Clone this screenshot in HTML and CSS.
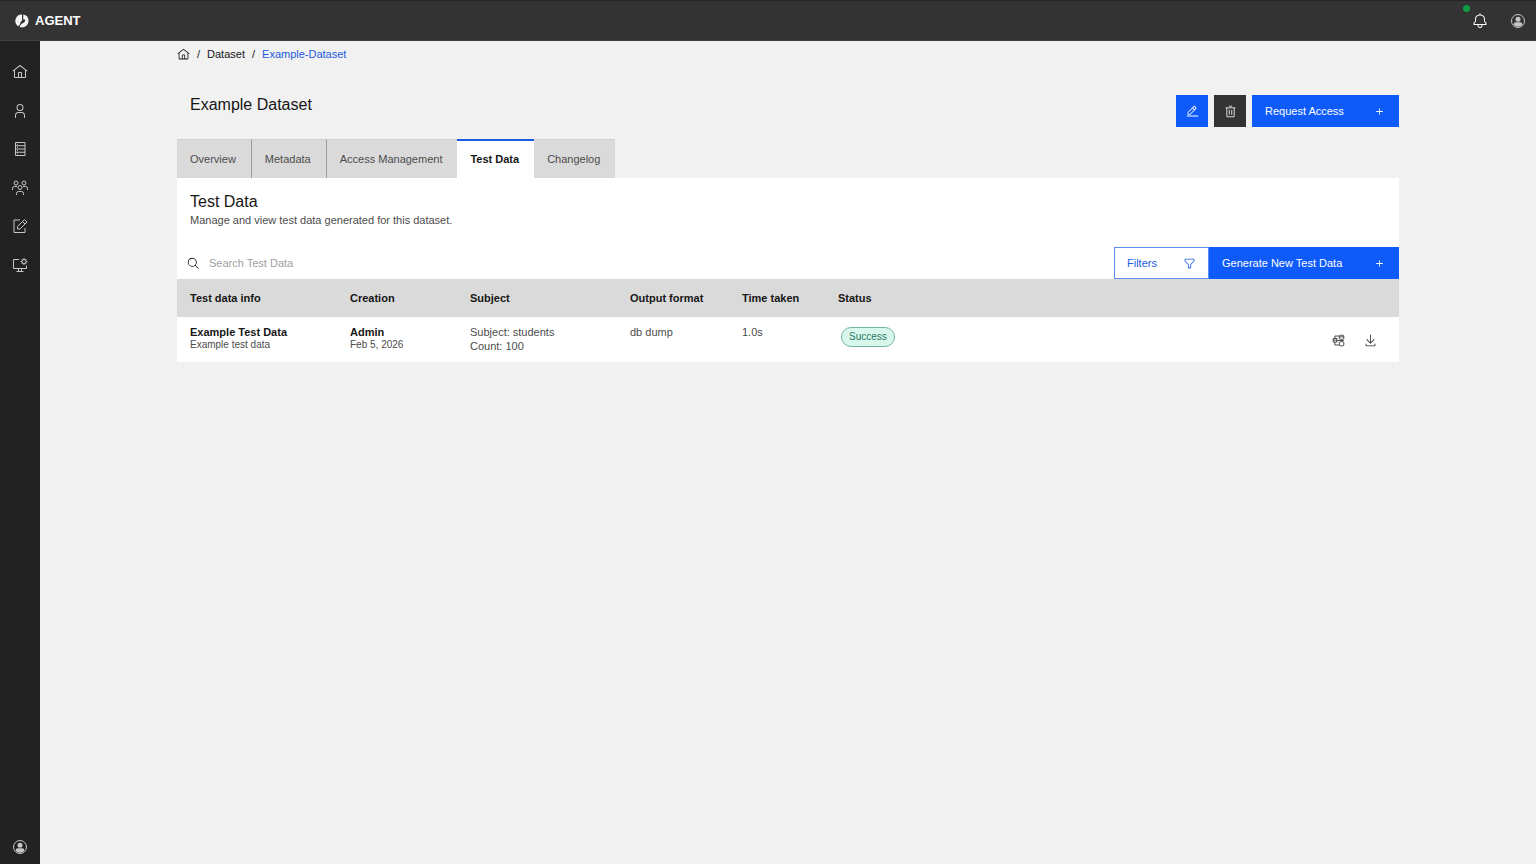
FILE: index.html
```html
<!DOCTYPE html>
<html lang="en">
<head>
  <meta charset="UTF-8" />
  <meta name="viewport" content="width=device-width, initial-scale=1" />
  <title>Example Dataset - Test Data</title>
  <link rel="stylesheet" href="styles.css">
</head>
<body>

  <!-- Shared icons -->
  <svg class="sprite" aria-hidden="true">
    <symbol id="home" viewBox="0 0 32 32"><path d="M16.6123,2.2138a1.01,1.01,0,0,0-1.2427,0L1,13.4194l1.2427,1.5717L4,13.6208V26a2.0041,2.0041,0,0,0,2,2H26a2.0037,2.0037,0,0,0,2-2V13.63L29.7573,15,31,13.4282ZM18,26H14V18h4Zm2,0V18a2.0023,2.0023,0,0,0-2-2H14a2.002,2.002,0,0,0-2,2v8H6V12.0615l10-7.79,10,7.8005V26Z"/></symbol>
    <symbol id="avatar" viewBox="0 0 32 32">
      <circle cx="16" cy="16" r="13" fill="none" stroke="currentColor" stroke-width="2"/>
      <circle cx="16" cy="12.500" r="5"/>
      <path d="M7.500 24v-1.500a4 4 0 0 1 4-4h9a4 4 0 0 1 4 4V24a12 12 0 0 1-17 0z"/>
    </symbol>
    <symbol id="add" viewBox="0 0 32 32"><path d="M17 15V8h-2v7H8v2h7v7h2v-7h7v-2z"/></symbol>
  </svg>

  <!-- Header -->
  <header class="header">
    <a href="#" class="brand">
      <svg class="brand-logo" viewBox="0 0 28 28">
        <path d="M14 1A13 13 0 0 0 6 24.500C12 22 9 16 14 13z"/>
        <path d="M16.500 1v10h4c0 5-2 6-5 7.500S10 22 9.500 26A13 13 0 0 0 27 14 13 13 0 0 0 16.500 1z"/>
      </svg>
      AGENT
    </a>
    <div class="header-actions">
      <button class="header-btn" aria-label="Notifications">
        <svg class="icon" viewBox="0 0 32 32"><path d="M28.7071,19.293,26,16.5859V13a10.0136,10.0136,0,0,0-9-9.9492V1H15V3.0508A10.0136,10.0136,0,0,0,6,13v3.5859L3.2929,19.293A1,1,0,0,0,3,20v3a1,1,0,0,0,1,1h7v.7768a5.152,5.152,0,0,0,4.5,5.1987A5.0057,5.0057,0,0,0,21,25V24h7a1,1,0,0,0,1-1V20A1,1,0,0,0,28.7071,19.293ZM19,25a3,3,0,0,1-6,0V24h6Zm8-3H5V20.4141L7.707,17.707A1,1,0,0,0,8,17V13a8,8,0,0,1,16,0v4a1,1,0,0,0,.293.707L27,20.4141Z"/></svg>
        <span class="dot"></span>
      </button>
      <button class="header-btn profile" aria-label="Profile"><svg class="icon"><use href="#avatar"/></svg></button>
    </div>
  </header>

  <div class="layout">
    <!-- Sidebar -->
    <nav class="sidebar">
      <div class="side-links">
        <a href="#" aria-label="Home"><svg class="icon"><use href="#home"/></svg></a>
        <a href="#" aria-label="User"><svg class="icon" viewBox="0 0 32 32"><path d="M16 4a5 5 0 1 1-5 5 5 5 0 0 1 5-5m0-2a7 7 0 1 0 7 7A7 7 0 0 0 16 2zM26 30H24V25a5 5 0 0 0-5-5H13a5 5 0 0 0-5 5v5H6V25a7 7 0 0 1 7-7h6a7 7 0 0 1 7 7z"/></svg></a>
        <a href="#" aria-label="Datasets">
          <svg class="icon line" viewBox="0 0 32 32"><path d="M7 3h19v26H7zM7 9.500h19M7 16h19M7 22.500h19M10 6.500h2M10 12.500h2M10 19.500h2M10 26h2"/></svg>
        </a>
        <a href="#" aria-label="Groups">
          <svg class="icon line" viewBox="0 0 32 32">
            <circle cx="8" cy="6" r="4"/><circle cx="24" cy="6" r="4"/><circle cx="16" cy="15" r="4"/>
            <path d="M1 20v-3a4 4 0 0 1 4-4h5M31 20v-3a4 4 0 0 0-4-4h-5M9 30v-3a4 4 0 0 1 4-4h6a4 4 0 0 1 4 4v3"/>
          </svg>
        </a>
        <a href="#" aria-label="Requests">
          <svg class="icon line" viewBox="0 0 32 32"><path d="M16 4H4v25h22v-9M11 22v-5L25 3l5 5-14 14zM21 7l5 5"/></svg>
        </a>
        <a href="#" aria-label="System settings">
          <svg class="icon line" viewBox="0 0 32 32">
            <path d="M14 5H3v18h26v-6M13 23v6M19 23v6M9 29h14"/>
            <circle cx="24" cy="9" r="4"/>
            <path d="M24 2v3M24 13v3M17 9h3M28 9h3M19 4l2 2M27 12l2 2M29 4l-2 2M21 12l-2 2"/>
          </svg>
        </a>
      </div>
      <a href="#" class="side-user" aria-label="Account"><svg class="icon"><use href="#avatar"/></svg></a>
    </nav>

    <!-- Main Content -->
    <main class="content">
      <nav class="breadcrumb" aria-label="Breadcrumb">
        <a href="#" aria-label="Home"><svg class="icon-sm"><use href="#home"/></svg></a>
        <span>/</span>
        <a href="#">Dataset</a>
        <span>/</span>
        <a href="#" class="current">Example-Dataset</a>
      </nav>

      <div class="title-row">
        <h1>Example Dataset</h1>
        <div class="title-actions">
          <button class="btn btn-icon" aria-label="Edit">
            <svg class="icon-sm" viewBox="0 0 32 32"><path d="M2 26H30V28H2zM25.4,9c0.8-0.8,0.8-2,0-2.8l-3.6-3.6c-0.8-0.8-2-0.8-2.8,0l-15,15V24h6.4L25.4,9z M20.4,4L24,7.6l-3,3L17.4,7L20.4,4z M6,22v-3.6l10-10l3.6,3.6l-10,10H6z"/></svg>
          </button>
          <button class="btn btn-icon btn-dark" aria-label="Delete">
            <svg class="icon-sm line" viewBox="0 0 32 32"><path d="M4 7h24M12 3h8M7 7v22h18V7M13 12v12M19 12v12"/></svg>
          </button>
          <button class="btn">Request Access <svg class="icon-sm"><use href="#add"/></svg></button>
        </div>
      </div>

      <div class="tabs" role="tablist">
        <button role="tab" class="tab">Overview</button>
        <button role="tab" class="tab">Metadata</button>
        <button role="tab" class="tab">Access Management</button>
        <button role="tab" class="tab active" aria-selected="true">Test Data</button>
        <button role="tab" class="tab">Changelog</button>
      </div>

      <section class="panel">
        <div class="panel-head">
          <h2>Test Data</h2>
          <p>Manage and view test data generated for this dataset.</p>
        </div>

        <div class="toolbar">
          <label class="search">
            <svg class="icon-sm" viewBox="0 0 32 32"><path d="M29,27.5859l-7.5521-7.5521a11.0177,11.0177,0,1,0-1.4141,1.4141L27.5859,29ZM4,13a9,9,0,1,1,9,9A9.01,9.01,0,0,1,4,13Z"/></svg>
            <input type="text" placeholder="Search Test Data" aria-label="Search Test Data" />
          </label>
          <button class="btn btn-outline">Filters
            <svg class="icon-sm" viewBox="0 0 32 32"><path d="M18,28H14a2,2,0,0,1-2-2V18.41L4.59,11A2,2,0,0,1,4,9.59V6A2,2,0,0,1,6,4H26a2,2,0,0,1,2,2V9.59A2,2,0,0,1,27.41,11L20,18.41V26A2,2,0,0,1,18,28ZM6,6V9.59l8,8V26h4V17.59l8-8V6Z"/></svg>
          </button>
          <button class="btn btn-generate">Generate New Test Data <svg class="icon-sm"><use href="#add"/></svg></button>
        </div>

        <table class="data-table">
          <colgroup>
            <col class="col-info"><col class="col-creation"><col class="col-subject">
            <col class="col-format"><col class="col-time"><col><col class="col-actions">
          </colgroup>
          <thead>
            <tr>
              <th>Test data info</th>
              <th>Creation</th>
              <th>Subject</th>
              <th>Output format</th>
              <th>Time taken</th>
              <th>Status</th>
              <th></th>
            </tr>
          </thead>
          <tbody>
            <tr>
              <td><strong>Example Test Data</strong><small>Example test data</small></td>
              <td><strong>Admin</strong><small>Feb 5, 2026</small></td>
              <td>Subject: students<br>Count: 100</td>
              <td>db dump</td>
              <td>1.0s</td>
              <td><span class="tag">Success</span></td>
              <td>
                <div class="row-actions">
                  <button aria-label="Show schema">
                    <svg class="icon-sm line" viewBox="0 0 32 32">
                      <path d="M3 11h9v9H3zM3 15h9M7 11V5h10M12 16h6M7 20v7h10"/>
                      <rect x="18" y="3" width="11" height="10" rx="2"/><path d="M18 7h11M18 16h11"/>
                      <rect x="18" y="19" width="11" height="10" rx="2"/>
                    </svg>
                  </button>
                  <button aria-label="Download">
                    <svg class="icon-sm" viewBox="0 0 32 32"><path d="M26 24v4H6V24H4v4a2 2 0 0 0 2 2H26a2 2 0 0 0 2-2V24zM26 14l-1.41-1.41L17 20.17V2H15V20.17L7.41 12.59 6 14l10 10z"/></svg>
                  </button>
                </div>
              </td>
            </tr>
          </tbody>
        </table>
      </section>
    </main>
  </div>

</body>
</html>
```
FILE: styles.css
```css
* {
  box-sizing: border-box;
  margin: 0;
  padding: 0;
}

body {
  font-family: "Liberation Sans", Arial, sans-serif;
  font-size: 11px;
  line-height: 14px;
  color: #161616;
  background: #f1f1f1;
  display: flex;
  flex-direction: column;
  min-height: 100vh;
}

a {
  color: inherit;
  text-decoration: none;
}

button,
input {
  font: inherit;
  color: inherit;
  background: none;
  border: none;
}

button {
  cursor: pointer;
}

.sprite {
  position: absolute;
  width: 0;
  height: 0;
}

.icon,
.icon-sm {
  display: block;
  width: 16px;
  height: 16px;
  fill: currentColor;
  flex-shrink: 0;
}

.icon-sm {
  width: 13px;
  height: 13px;
}

.line {
  fill: none;
  stroke: currentColor;
  stroke-width: 2;
}

/* Header */
.header {
  display: flex;
  justify-content: space-between;
  align-items: center;
  height: 41px;
  padding: 0 10px 0 15px;
  background: #333;
  border-top: 1px solid #262626;
  border-bottom: 1px solid #3e3e3e;
  color: #fff;
}

.brand {
  display: flex;
  align-items: center;
  gap: 6px;
  font-size: 13px;
  font-weight: bold;
}

.brand-logo {
  width: 14px;
  height: 14px;
  fill: #f4f4f4;
}

.header-actions {
  display: flex;
  gap: 22px;
}

.header-btn {
  position: relative;
}

.profile {
  color: #c6c6c6;
}

.dot {
  position: absolute;
  top: -8px;
  left: -9px;
  width: 7px;
  height: 7px;
  border-radius: 50%;
  background: #109c45;
}

.layout {
  display: flex;
  flex: 1;
}

/* Sidebar */
.sidebar {
  display: flex;
  flex-direction: column;
  justify-content: space-between;
  width: 40px;
  padding: 12px 0 9px;
  background: #222;
  color: #c6c6c6;
  flex-shrink: 0;
}

.side-links {
  display: grid;
  grid-auto-rows: 1fr;
  height: 231px;
}

.side-links a,
.side-user {
  display: flex;
  align-items: center;
  justify-content: center;
}

/* Main Content */
.content {
  flex: 1;
  min-width: 0;
  max-width: 1222px;
  margin: 0 auto;
}

.breadcrumb {
  display: flex;
  align-items: center;
  gap: 7px;
  height: 26px;
}

.breadcrumb .current {
  color: #1c5be0;
}

.title-row {
  display: flex;
  justify-content: space-between;
  padding: 28px 0 12px 13px;
}

h1,
h2 {
  font-size: 16px;
  font-weight: normal;
  line-height: 20px;
}

.title-actions {
  display: flex;
  gap: 6px;
}

.btn {
  display: flex;
  align-items: center;
  justify-content: space-between;
  height: 32px;
  min-width: 147px;
  padding: 0 13px;
  background: #0f5bfa;
  color: #fff;
}

.btn-icon {
  justify-content: center;
  min-width: 32px;
  padding: 0;
}

.btn-dark {
  background: #333;
}

.btn-outline {
  min-width: 95px;
  padding: 0 12px;
  background: #fff;
  border: 1px solid #5c8ff0;
  color: #1c5be0;
}

.btn-generate {
  min-width: 190px;
}

/* Tabs */
.tabs {
  display: flex;
}

.tab {
  height: 39px;
  padding: 0 15px 0 13px;
  background: #dadada;
  border-top: 1px solid #d0d0d0;
  color: #4c4c4c;
}

.tab:nth-child(-n+2) {
  border-right: 1px solid #9c9c9c;
}

.tab.active {
  padding-bottom: 1px;
  background: #fff;
  border-top: 2px solid #1c5be0;
  color: #161616;
  font-weight: bold;
}

/* Panel */
.panel {
  background: #fff;
}

.panel-head {
  padding: 14px 13px 20px;
}

.panel-head p {
  color: #4c4c4c;
  padding-top: 1px;
}

.toolbar {
  display: flex;
}

.search {
  display: flex;
  align-items: center;
  flex: 1;
  gap: 9px;
  padding-left: 10px;
}

.search input {
  flex: 1;
  height: 32px;
  outline: none;
}

.search input::placeholder {
  color: #a0a0a0;
}

.data-table {
  width: 100%;
  table-layout: fixed;
  border-collapse: collapse;
}

.col-info,
.col-subject {
  width: 160px;
}

.col-creation {
  width: 120px;
}

.col-format {
  width: 112px;
}

.col-time {
  width: 96px;
}

.col-actions {
  width: 96px;
}

.data-table th {
  height: 38px;
  padding: 0 0 0 13px;
  background: #dadada;
  text-align: left;
}

.data-table td {
  height: 45px;
  padding: 8px 0 8px 13px;
  vertical-align: top;
  color: #4c4c4c;
}

.data-table strong {
  display: block;
  color: #161616;
}

.data-table small {
  display: block;
  font-size: 10px;
  line-height: 12px;
}

.tag {
  display: inline-block;
  height: 20px;
  margin: 2px 3px 0;
  padding: 0 7px;
  border: 1px solid #74b5a4;
  border-radius: 10px;
  background: #d9f8ec;
  color: #1f7563;
  font-size: 10px;
  line-height: 18px;
}

.row-actions {
  display: flex;
  gap: 19px;
  padding: 9px 0 0 16px;
}

.row-actions button {
  color: #262626;
}
```
